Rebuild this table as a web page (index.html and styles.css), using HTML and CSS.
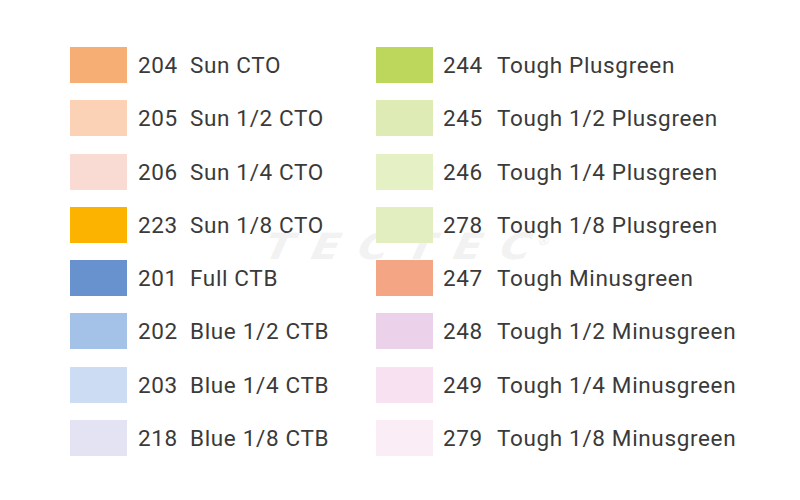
FILE: index.html
```html
<!DOCTYPE html>
<html>
<head>
<meta charset="utf-8">
<link rel="stylesheet" href="styles.css">
</head>
<body>
<div class="page">
  <div class="watermark">TECTEC<span class="reg">®</span></div>
  <div class="grid">
    <div class="item"><div class="sw c204"></div><span class="num">204</span><span class="name">Sun CTO</span></div>
    <div class="item"><div class="sw c244"></div><span class="num">244</span><span class="name">Tough Plusgreen</span></div>
    <div class="item"><div class="sw c205"></div><span class="num">205</span><span class="name">Sun 1/2 CTO</span></div>
    <div class="item"><div class="sw c245"></div><span class="num">245</span><span class="name">Tough 1/2 Plusgreen</span></div>
    <div class="item"><div class="sw c206"></div><span class="num">206</span><span class="name">Sun 1/4 CTO</span></div>
    <div class="item"><div class="sw c246"></div><span class="num">246</span><span class="name">Tough 1/4 Plusgreen</span></div>
    <div class="item"><div class="sw c223"></div><span class="num">223</span><span class="name">Sun 1/8 CTO</span></div>
    <div class="item"><div class="sw c278"></div><span class="num">278</span><span class="name">Tough 1/8 Plusgreen</span></div>
    <div class="item"><div class="sw c201"></div><span class="num">201</span><span class="name">Full CTB</span></div>
    <div class="item"><div class="sw c247"></div><span class="num">247</span><span class="name">Tough Minusgreen</span></div>
    <div class="item"><div class="sw c202"></div><span class="num">202</span><span class="name">Blue 1/2 CTB</span></div>
    <div class="item"><div class="sw c248"></div><span class="num">248</span><span class="name">Tough 1/2 Minusgreen</span></div>
    <div class="item"><div class="sw c203"></div><span class="num">203</span><span class="name">Blue 1/4 CTB</span></div>
    <div class="item"><div class="sw c249"></div><span class="num">249</span><span class="name">Tough 1/4 Minusgreen</span></div>
    <div class="item"><div class="sw c218"></div><span class="num">218</span><span class="name">Blue 1/8 CTB</span></div>
    <div class="item"><div class="sw c279"></div><span class="num">279</span><span class="name">Tough 1/8 Minusgreen</span></div>
  </div>
</div>
</body>
</html>
```
FILE: styles.css
```css
html, body {
  margin: 0;
  padding: 0;
  background: #ffffff;
}
.page {
  position: relative;
  width: 800px;
  height: 500px;
  box-sizing: border-box;
  padding: 47px 0 0 70px;
  font-family: Roboto, "Liberation Sans", sans-serif;
  color: #3a3a3a;
}
.grid {
  position: relative;
  display: grid;
  grid-template-columns: 306px 380px;
  grid-auto-rows: 36px;
  row-gap: 17.3px;
}
.item {
  display: flex;
  align-items: center;
  font-size: 22.5px;
  white-space: nowrap;
}
.sw {
  width: 57px;
  height: 36px;
  flex: none;
  margin-right: 11px;
}
.num {
  display: inline-block;
  width: 52px;
  letter-spacing: 0.6px;
}
.name {
  letter-spacing: 0.65px;
}
.item:nth-child(even) .sw { margin-right: 10px; }
.item:nth-child(even) .num { width: 54px; }
.watermark {
  position: absolute;
  left: 270px;
  top: 226px;
  font-family: "DejaVu Sans", sans-serif;
  font-weight: 900;
  font-style: italic;
  font-size: 36px;
  letter-spacing: 16px;
  color: #f2f2f2;
  transform: skewX(-12deg) scaleX(1.15);
  transform-origin: left top;
}
.watermark .reg {
  font-size: 12px;
  letter-spacing: 0;
  vertical-align: 14px;
  margin-left: -12px;
}
.c204 { background: #f6ae74; }
.c205 { background: #fbd2b6; }
.c206 { background: #fadbd3; }
.c223 { background: #fbb300; }
.c201 { background: #6792ce; }
.c202 { background: #a4c1e8; }
.c203 { background: #ccdcf3; }
.c218 { background: #e3e3f3; }
.c244 { background: #bcd75b; }
.c245 { background: #deebb4; }
.c246 { background: #e6f0c5; }
.c278 { background: #e2edc0; }
.c247 { background: #f4a584; }
.c248 { background: #ebd1e9; }
.c249 { background: #f8e1f0; }
.c279 { background: #fbedf6; }
```
